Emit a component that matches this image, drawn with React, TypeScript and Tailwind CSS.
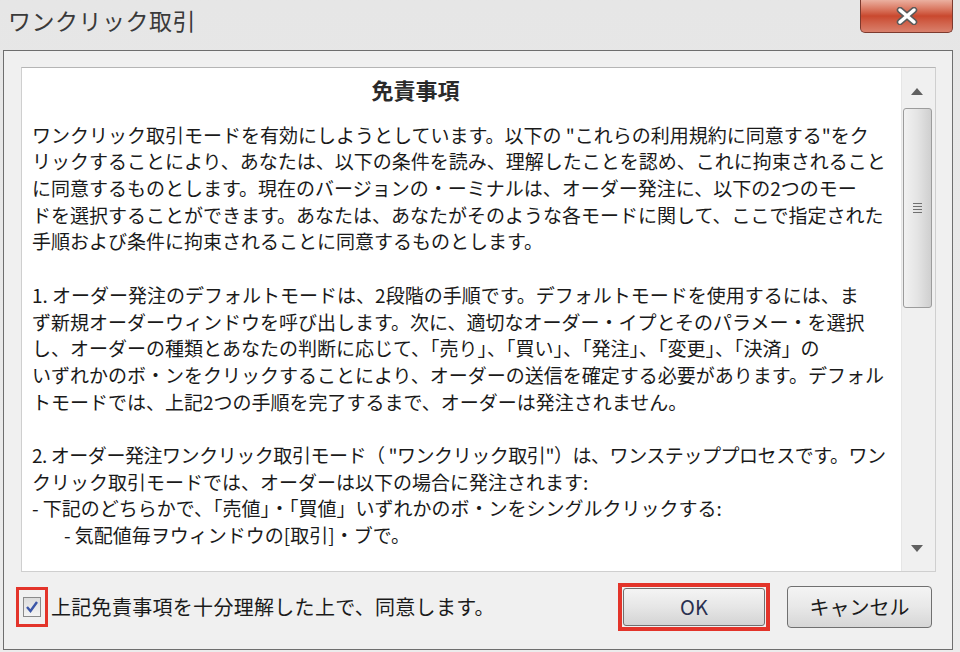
import React from 'react';

const para1 = [
  'ワンクリック取引モードを有効にしようとしています。以下の "これらの利用規約に同意する"をク',
  'リックすることにより、あなたは、以下の条件を読み、理解したことを認め、これに拘束されること',
  'に同意するものとします。現在のバージョンの・ーミナルは、オーダー発注に、以下の2つのモー',
  'ドを選択することができます。あなたは、あなたがそのような各モードに関して、ここで指定された',
  '手順および条件に拘束されることに同意するものとします。',
];

const para2 = [
  '1. オーダー発注のデフォルトモードは、2段階の手順です。デフォルトモードを使用するには、ま',
  'ず新規オーダーウィンドウを呼び出します。次に、適切なオーダー・イプとそのパラメー・を選択',
  'し、オーダーの種類とあなたの判断に応じて、「売り」、「買い」、「発注」、「変更」、「決済」の',
  'いずれかのボ・ンをクリックすることにより、オーダーの送信を確定する必要があります。デフォル',
  'トモードでは、上記2つの手順を完了するまで、オーダーは発注されません。',
];

const para3 = [
  'クリック取引モードでは、オーダーは以下の場合に発注されます:',
  '- 下記のどちらかで、「売値」・「買値」いずれかのボ・ンをシングルクリックする:',
];

const font = { fontFamily: '"Noto Sans CJK JP", "Noto Sans", sans-serif' };

const Lines = ({ lines }: { lines: string[] }) => (
  <div>
    {lines.map((l, i) => (
      <div key={i} className="whitespace-pre h-[26.7px]">
        {l}
      </div>
    ))}
  </div>
);

const Scrollbar = () => (
  <div className="w-[34px] bg-[#f0f0f0] border-l border-[#e6e6e6] flex flex-col items-start">
    <div className="h-[38px] w-full flex items-center justify-center pt-[8px] pr-[3px]">
      <svg width="12" height="7" viewBox="0 0 12 7">
        <path d="M6 0 L12 7 L0 7 Z" fill="#606060" />
      </svg>
    </div>
    <div className="ml-[1px] w-[29px] h-[200px] mt-[2px] rounded-[3px] border border-[#9c9c9c] bg-gradient-to-r from-[#f2f2f2] via-[#e4e4e4] to-[#cfcfcf] flex items-center justify-center">
      <div className="flex flex-col gap-[2px]">
        <div className="w-[9px] h-[1px] bg-[#707070]" />
        <div className="w-[9px] h-[1px] bg-[#707070]" />
        <div className="w-[9px] h-[1px] bg-[#707070]" />
        <div className="w-[9px] h-[1px] bg-[#707070]" />
      </div>
    </div>
    <div className="flex-1" />
    <div className="h-[34px] w-full flex items-center justify-center pb-[12px] pr-[3px]">
      <svg width="12" height="7" viewBox="0 0 12 7">
        <path d="M0 0 L12 0 L6 7 Z" fill="#606060" />
      </svg>
    </div>
  </div>
);

export default function App() {
  return (
    <div className="w-[960px] h-[652px] bg-gradient-to-b from-[#e6e6e6] to-[#ececec] flex flex-col overflow-hidden" style={font}>
      {/* title bar */}
      <div className="h-[50px] flex items-start justify-between">
        <div className="pl-[8px] pt-[4px] text-[23px] leading-[32px] text-[#3a3a3a] tracking-[0.5px]">ワンクリック取引</div>
        <div className="mr-[7px] w-[93px] h-[33px] rounded-b-[5px] border border-t-0 border-[#7d3a2e] bg-gradient-to-b from-[#eab0a0] via-[#c9482e] to-[#d9806c] flex items-center justify-center">
          <svg width="24" height="18" viewBox="0 0 24 18">
            <path d="M5 3 L19 15 M19 3 L5 15" stroke="#5a5a5a" strokeWidth="6.5" strokeLinecap="round" />
            <path d="M5 3 L19 15 M19 3 L5 15" stroke="#ffffff" strokeWidth="3.5" strokeLinecap="round" />
          </svg>
        </div>
      </div>

      {/* client area */}
      <div className="ml-[3px] w-[950px] h-[600px] border border-[#6e6e6e] bg-[#f0f0f0] flex flex-col">
        <div className="ml-[17px] mt-[16px] w-[915px] h-[505px] border border-[#cfcfcf] border-t-[#b5b5b5] bg-white flex">
          <div className="flex-1 pl-[10px] pt-[8px] text-[19px] text-[#1a1a1a] leading-[26.7px]">
            <div className="text-center pr-[102px] text-[22px] font-bold text-[#2a2a2a] h-[26.7px]">免責事項</div>
            <div className="h-[19px]" />
            <Lines lines={para1} />
            <div className="h-[26.7px]" />
            <Lines lines={para2} />
            <div className="h-[26.7px]" />
            <div className="whitespace-pre h-[26.7px] tracking-[-0.45px]">2. オーダー発注ワンクリック取引モード（ "ワンクリック取引"）は、ワンステッププロセスです。ワン</div>
            <Lines lines={para3} />
            <div className="pl-[32px] whitespace-pre h-[26.7px]">- 気配値毎ヲウィンドウの[取引]・ブで。</div>
          </div>
          <Scrollbar />
        </div>

        {/* bottom row */}
        <div className="flex items-center mt-[11px]">
          <div className="ml-[12px] w-[32px] h-[40px] border-[3px] border-[#e3342a] flex items-center justify-center">
            <div className="w-[18px] h-[20px] border border-[#8a8a8a] bg-gradient-to-b from-[#dcdcdc] to-[#f4f4f4] flex items-center justify-center">
              <svg width="14" height="14" viewBox="0 0 14 14">
                <path d="M2 7 L5.5 11 L12 2" stroke="#3b56a8" strokeWidth="2.4" fill="none" />
              </svg>
            </div>
          </div>
          <div className="ml-[3px] text-[20px] text-[#1a1a1a] tracking-[0.3px]">上記免責事項を十分理解した上で、同意します。</div>
          <div className="flex-1" />
          <div className="w-[152px] h-[48px] border-[4px] border-[#e3342a] p-[1px] flex">
            <div className="flex-1 rounded-[3px] border border-[#707070] bg-gradient-to-b from-[#f4f4f4] via-[#e6e6e6] to-[#d4d4d4] flex items-center justify-center text-[20px] text-[#2a3050]">OK</div>
          </div>
          <div className="ml-[17px] mr-[20px] w-[145px] h-[42px] rounded-[4px] border border-[#707070] bg-gradient-to-b from-[#f4f4f4] via-[#e8e8e8] to-[#d6d6d6] flex items-center justify-center text-[20px] text-[#1a1a1a]">キャンセル</div>
        </div>
      </div>
    </div>
  );
}
